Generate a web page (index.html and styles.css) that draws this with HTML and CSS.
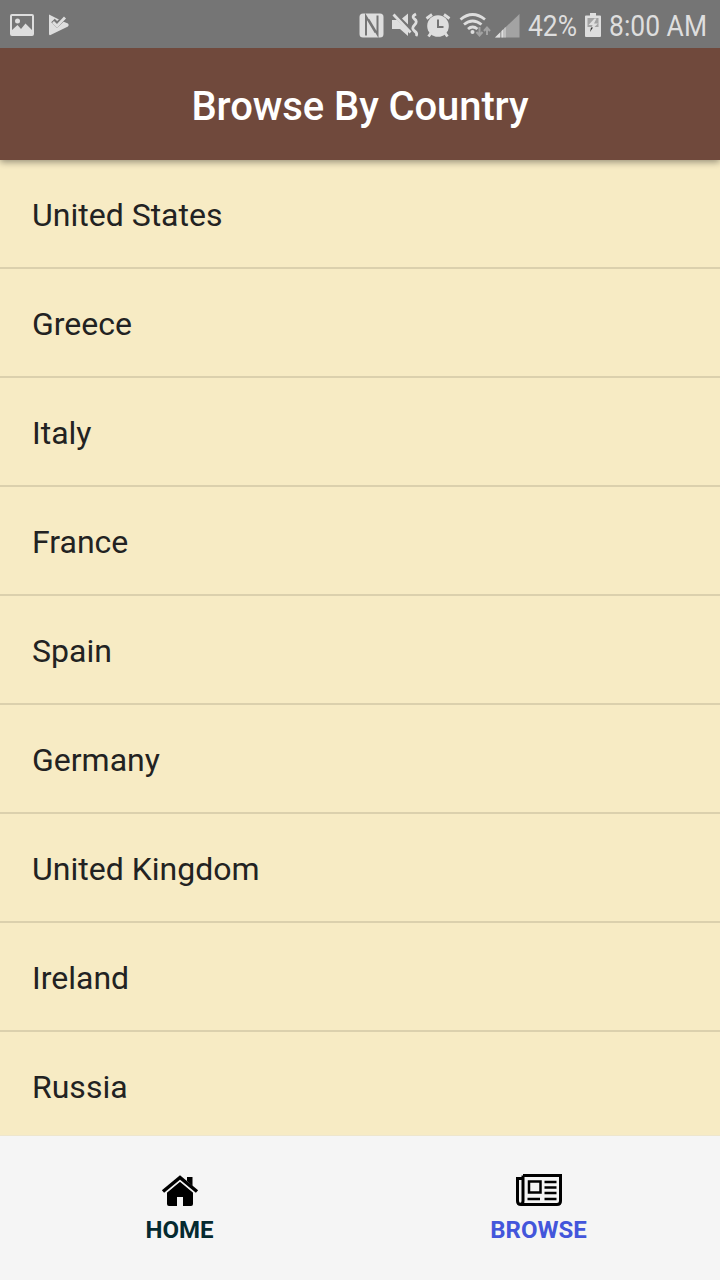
FILE: index.html
```
<!DOCTYPE html>
<html lang="en">
<head>
    <meta charset="UTF-8">
    <meta name="viewport" content="width=device-width, initial-scale=1.0">
    <title>Browse By Country</title>
    <link rel="stylesheet" href="styles.css">
</head>
<body>
    <div class="status-bar">
        <div class="status-left">
            <!-- picture -->
            <svg width="24" height="22" viewBox="0 0 24 22">
                <path fill-rule="evenodd" d="M2 0H22Q24 0 24 2V20Q24 22 22 22H2Q0 22 0 20V2Q0 0 2 0ZM2 2V16L7.500 11L11 15L15.500 9.500L22 16V2Z"/>
                <circle cx="7.500" cy="7" r="2.500"/>
            </svg>
            <!-- play store check -->
            <svg class="icon-play" width="22" height="22" viewBox="0 0 22 22">
                <path d="M1 .5L15 7.500L20 9.500Q21.500 11 20 12.500L2.500 21Q1 21.500 1 20Z"/>
                <path class="play-gap" d="M5 6.500L9 10.500L18 2"/>
                <path class="play-line" d="M5 8L9 12L17 3.500"/>
            </svg>
        </div>
        <div class="status-right">
            <!-- nfc -->
            <svg width="25" height="25" viewBox="0 0 25 25">
                <rect x=".5" y=".5" width="24" height="24" rx="3.500"/>
                <path class="nfc-line" d="M7 22.500V3.500L16.500 19.500M18.500 2.500V21.500L9.500 6.500"/>
            </svg>
            <!-- muted, vibrate -->
            <svg class="icon-mute" width="26" height="24" viewBox="0 0 26 24">
                <path d="M0 7H5L16 18V23L8 16H0ZM10 5.500L16 .5V11.500Z"/>
                <path class="line" d="M1.500 1.500L18.500 19.500"/>
                <path class="line" d="M24 1Q19 3.500 22.500 6T22.500 12T22.500 18T24 23"/>
            </svg>
            <!-- alarm -->
            <svg class="icon-alarm" width="26" height="25" viewBox="0 0 26 25">
                <circle cx="13" cy="13" r="10.800"/>
                <path class="line" d="M1.500 5.500L7 1.500M24.500 5.500L19 1.500M6 20L3.500 23.500M20 20L22.500 23.500"/>
                <path class="cut-line" d="M13 6.500V14H18.500"/>
            </svg>
            <!-- wifi -->
            <svg class="icon-wifi" width="32" height="25" viewBox="0 0 32 25">
                <path class="line" d="M1.500 6.500Q13.500-3.500 26 6.500M5 11.500Q13.500 4.500 22.500 11.500M9 16Q13.500 12 18.500 16"/>
                <circle cx="13.500" cy="19" r="2"/>
                <path class="dim-line" d="M20.500 14V22M17.500 19L20.500 22.500L23.500 19M28 22V15M25 18L28 14.500L31 18"/>
            </svg>
            <!-- signal -->
            <svg class="icon-signal" width="25" height="25" viewBox="0 0 25 25">
                <path class="dim" d="M0 24.500L24.500 1V24.500Z"/>
                <path d="M0 24.500L5 19.500V24.500ZM6.500 24.500V18L8.500 16V24.500ZM9.500 24.500V15L10.500 14V24.500Z"/>
            </svg>
            <svg class="status-text icon-percent" width="49" height="48">
                <text x="0" y="35" textLength="49" lengthAdjust="spacingAndGlyphs">42%</text>
            </svg>
            <!-- battery -->
            <svg class="icon-battery" width="16" height="24" viewBox="0 0 16 24">
                <path d="M5 0H11V2.500H15Q16 2.500 16 3.500V23Q16 24 15 24H1Q0 24 0 23V3.500Q0 2.500 1 2.500H5Z"/>
                <path class="battery-empty" d="M2.500 5H13.500V14H2.500Z"/>
                <path d="M9.500 5.500L3.500 12H7.500L5.500 18L13 10.500H9L11.500 5.500Z"/>
                <path class="battery-bolt" d="M6 14.500H8L5 19Z"/>
            </svg>
            <svg class="status-text icon-time" width="99" height="48">
                <text x="0" y="35" textLength="98" lengthAdjust="spacingAndGlyphs">8:00 AM</text>
            </svg>
        </div>
    </div>

    <header class="header">
        <h1 class="title">Browse By Country</h1>
    </header>

    <ul class="country-list">
        <li class="country">United States</li>
        <li class="country">Greece</li>
        <li class="country">Italy</li>
        <li class="country">France</li>
        <li class="country">Spain</li>
        <li class="country">Germany</li>
        <li class="country">United Kingdom</li>
        <li class="country">Ireland</li>
        <li class="country">Russia</li>
    </ul>

    <nav class="tabs">
        <div class="tab">
            <svg width="38" height="32" viewBox="0 0 38 32">
                <path d="M26 2H31.500V11L26 6ZM6 17L19 6L32 17V29Q32 31 30 31H22V22H16V31H8Q6 31 6 29Z"/>
                <path class="roof-gap" d="M4 18.500L19 6L34 18.500"/>
                <path class="roof" d="M2 16.500L19 2.500L36 16.500"/>
            </svg>
            <span class="tab-label">HOME</span>
        </div>
        <div class="tab tab-active">
            <svg class="icon-news" width="46" height="32" viewBox="0 0 46 32">
                <path d="M7 1.500H44.500V27Q44.500 30.500 41 30.500H5Q1.500 30.500 1.500 27V4.500H7M7 1.500V27Q7 30.500 4 30.500"/>
                <path class="thin" d="M13 7.500H24.500V18.500H13ZM28.500 8H40.500M28.500 13.500H40.500M28.500 19H40.500M11.500 25H24M28.500 25H40.500"/>
            </svg>
            <span class="tab-label">BROWSE</span>
        </div>
    </nav>
</body>
</html>
```

FILE: styles.css
```
*{
    box-sizing: border-box;
}
body{
    margin: 0;
    height: 100vh;
    display: flex;
    flex-direction: column;
    overflow: hidden;
    background-color: #f7ebc4;
    font-family: Roboto, sans-serif;
}
svg{
    display: block;
    flex: none;
    overflow: visible;
}

.status-bar{
    height: 48px;
    flex: none;
    display: flex;
    justify-content: space-between;
    align-items: center;
    position: relative;
    z-index: 2;
    padding: 0 12px 0 10px;
    background-color: #757575;
    fill: #dedede;
}
.status-left,
.status-right{
    display: flex;
    align-items: center;
}
.status-left{
    padding-top: 2px;
}
.status-right{
    padding-top: 2px;
}
.icon-play{
    margin-left: 14px;
}
.line,
.play-line,
.play-gap{
    fill: none;
    stroke: #dedede;
    stroke-width: 2.800;
}
.play-gap{
    stroke: #757575;
    stroke-width: 5;
}
.nfc-line,
.cut-line{
    fill: none;
    stroke: #757575;
    stroke-width: 2;
}
.dim{
    fill: #a3a3a3;
}
.dim-line{
    fill: none;
    stroke: #a3a3a3;
    stroke-width: 2;
}
.icon-mute{
    margin-left: 8px;
}
.icon-alarm{
    margin-left: 7px;
}
.icon-wifi{
    margin-left: 8px;
}
.icon-signal{
    margin-left: 4px;
}
.status-text{
    font-size: 30px;
}
.icon-percent{
    margin-left: 8px;
}
.icon-battery{
    margin-left: 8px;
}
.icon-time{
    margin-left: 8px;
}
.battery-empty{
    fill: #a3a3a3;
}
.battery-bolt{
    fill: #333333;
}

.header{
    height: 112px;
    flex: none;
    display: flex;
    align-items: center;
    justify-content: center;
    position: relative;
    padding-top: 5px;
    background-color: #70493c;
    box-shadow: 0 2px 7px rgba(0, 0, 0, 0.4);
}
.title{
    margin: 0;
    color: white;
    font-size: 40px;
    font-weight: 500;
    letter-spacing: -0.1px;
}

.country-list{
    flex: 1;
    min-height: 0;
    overflow: hidden;
    margin: 0;
    padding: 0;
    list-style: none;
}
.country{
    height: 109px;
    padding-left: 32px;
    border-bottom: 2px solid #dbd0ad;
    color: #222222;
    font-size: 32px;
    line-height: 110px;
}

.tabs{
    height: 145px;
    flex: none;
    display: flex;
    padding-right: 2px;
    border-top: 1px solid #eee6cd;
    background-color: #f5f5f5;
}
.tab{
    flex: 1;
    display: flex;
    flex-direction: column;
    align-items: center;
    padding-top: 39px;
    color: #052a30;
}
.tab-active{
    padding-top: 38px;
    color: #4356db;
}
.tab-label{
    margin-top: 9px;
    font-size: 24px;
    font-weight: bold;
    line-height: 28px;
}
.tab-active .tab-label{
    margin-top: 10px;
}
.roof{
    fill: none;
    stroke: black;
    stroke-width: 3.500;
}
.roof-gap{
    fill: none;
    stroke: #f5f5f5;
    stroke-width: 1.200;
}
.icon-news{
    fill: none;
    stroke: black;
    stroke-width: 3;
}
.thin{
    stroke-width: 2.500;
}
```
